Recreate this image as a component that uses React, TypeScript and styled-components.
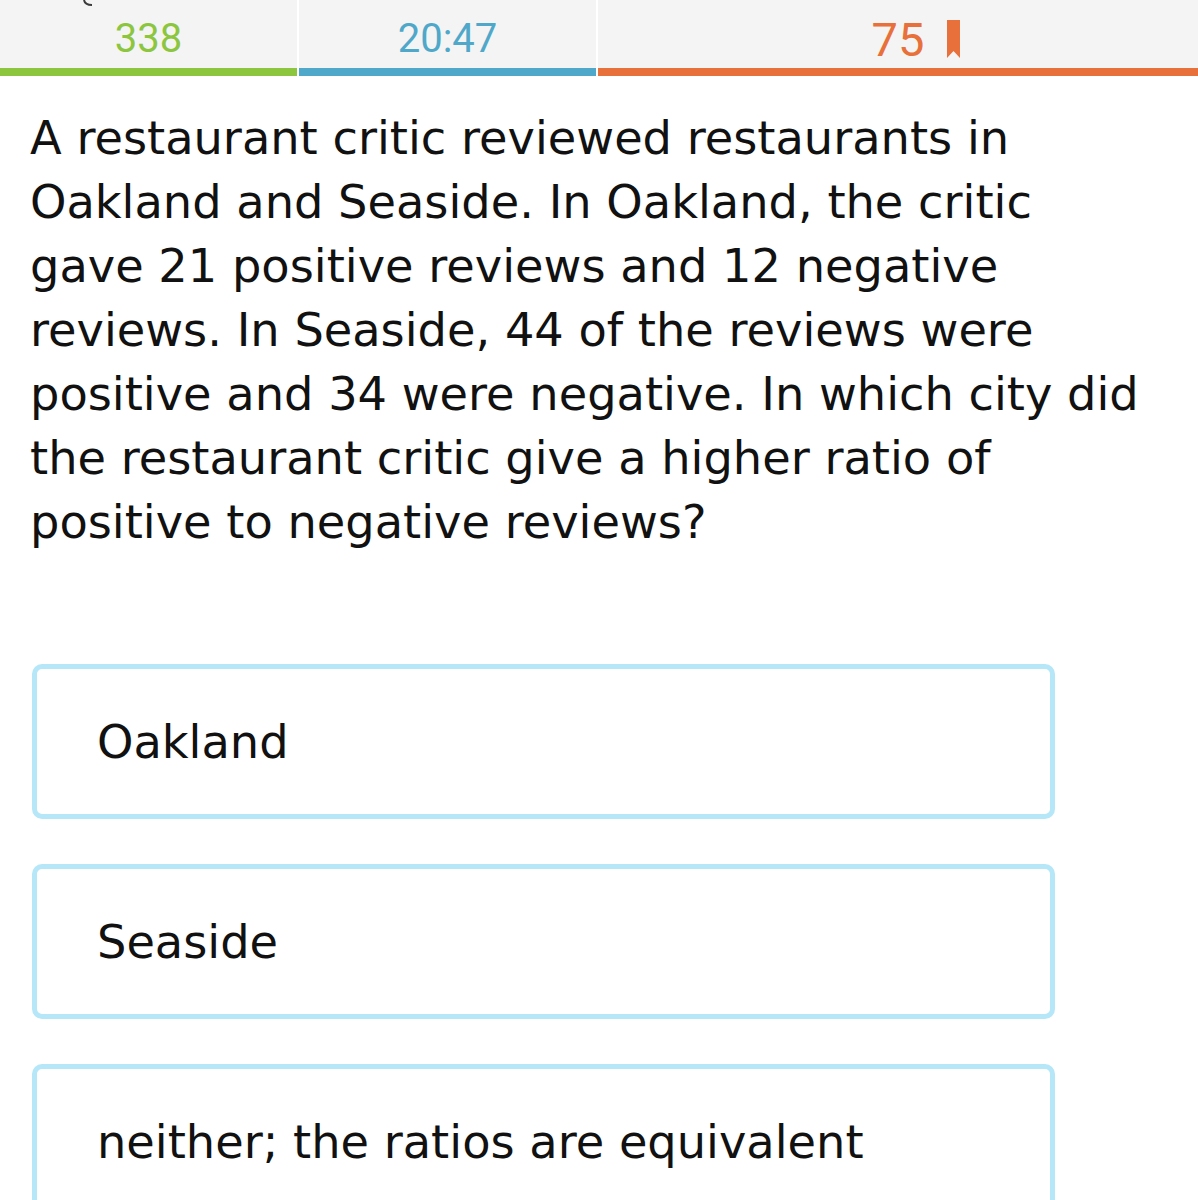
import styled, { createGlobalStyle } from 'styled-components'

const GlobalStyle = createGlobalStyle`
  html, body {
    margin: 0;
    padding: 0;
    background: #ffffff;
  }
`

const Page = styled.div`
  width: 1198px;
  height: 1200px;
  overflow: hidden;
  background: #ffffff;
`

const StatusBar = styled.div`
  position: relative;
  display: grid;
  grid-template-columns: 297px 297px 1fr;
  column-gap: 2px;
`

const BackHint = styled.svg`
  position: absolute;
  left: 80px;
  top: 0;
`

const StatCell = styled.div<{ $color: string; $size?: number }>`
  box-sizing: border-box;
  display: flex;
  align-items: center;
  justify-content: center;
  height: 76px;
  padding-top: 10px;
  background: #f4f4f4;
  border-bottom: 8px solid ${({ $color }) => $color};
  color: ${({ $color }) => $color};
  font-family: Roboto, 'Liberation Sans', sans-serif;
  font-size: ${({ $size }) => $size ?? 40}px;
  line-height: 1;
`

const Count = styled.span`
  position: relative;

  svg {
    position: absolute;
    left: calc(100% + 23px);
    top: 50%;
    transform: translateY(-50%);
    display: block;
  }
`

const Question = styled.p`
  margin: 0;
  padding: 30px 46px 0 30px;
  font-family: 'DejaVu Sans', Verdana, sans-serif;
  font-size: 46.3px;
  line-height: 64px;
  color: #111111;
`

const Options = styled.ul`
  list-style: none;
  margin: 0;
  padding: 110px 0 0 32px;
  display: flex;
  flex-direction: column;
  gap: 45px;
`

const Option = styled.li`
  box-sizing: border-box;
  display: flex;
  align-items: center;
  width: 1023px;
  height: 155px;
  padding-left: 60px;
  border: 5px solid #b5e7f8;
  border-radius: 10px;
  font-family: 'DejaVu Sans', Verdana, sans-serif;
  font-size: 46.3px;
  color: #111111;
`

function Bookmark() {
  return (
    <svg width="13" height="38" viewBox="0 0 13 38">
      <path d="M0 0 H13 V38 L6.5 31 L0 38 Z" fill="#e8703a" />
    </svg>
  )
}

const choices = ['Oakland', 'Seaside', 'neither; the ratios are equivalent']

export default function App() {
  return (
    <Page>
      <GlobalStyle />
      <StatusBar>
        <BackHint width="16" height="8" viewBox="0 0 16 8">
          <path
            d="M4 0 Q5 5 12 5"
            fill="none"
            stroke="#3a3a3a"
            strokeWidth="2"
          />
        </BackHint>
        <StatCell $color="#8cc63f">338</StatCell>
        <StatCell $color="#4fa8c9">20:47</StatCell>
        <StatCell $color="#e8703a" $size={47}>
          <Count>
            75
            <Bookmark />
          </Count>
        </StatCell>
      </StatusBar>

      <Question>
        A restaurant critic reviewed restaurants in Oakland and Seaside. In
        Oakland, the critic gave 21 positive reviews and 12 negative reviews. In
        Seaside, 44 of the reviews were positive and 34 were negative. In which
        city did the restaurant critic give a higher ratio of positive to
        negative reviews?
      </Question>

      <Options>
        {choices.map((choice) => (
          <Option key={choice}>{choice}</Option>
        ))}
      </Options>
    </Page>
  )
}
